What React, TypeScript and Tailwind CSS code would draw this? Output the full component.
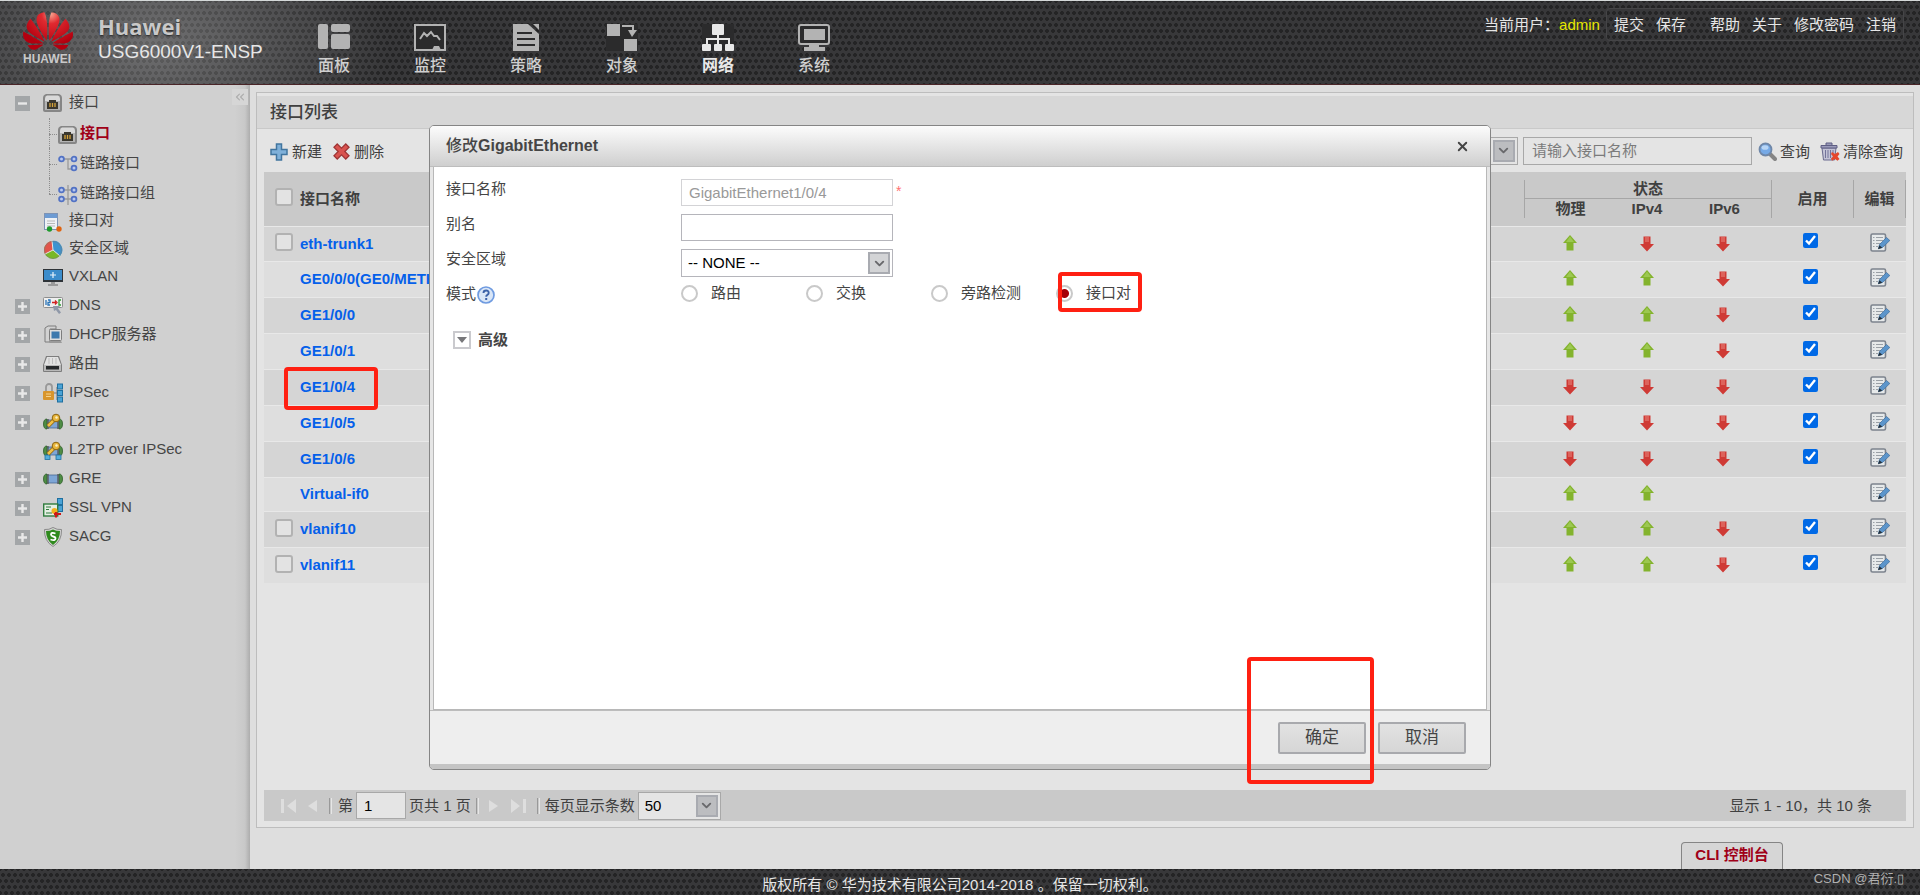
import React, { useState } from "react";
import { ChevronDown, ChevronsLeft, X } from "lucide-react";
import { SiHuawei } from "react-icons/si";
import clsx from "clsx";

type Status = "up" | "down" | null;

interface InterfaceRow {
  name: string;
  selectable?: boolean;
  marked?: boolean;
  physical: Status;
  ipv4: Status;
  ipv6: Status;
  enabled?: boolean;
}

interface TreeItem {
  label: string;
  icon: React.ReactNode;
  toggle?: boolean;
}

const PATTERN =
  "bg-[#38383a] bg-[radial-gradient(circle,#242425_1.6px,transparent_2.2px),radial-gradient(circle,#242425_1.6px,transparent_2.2px)] bg-[length:6px_12px] bg-[position:0_0,3px_6px]";

const rows: InterfaceRow[] = [
  { name: "eth-trunk1", selectable: true, physical: "up", ipv4: "down", ipv6: "down", enabled: true },
  { name: "GE0/0/0(GE0/METH)", physical: "up", ipv4: "up", ipv6: "down", enabled: true },
  { name: "GE1/0/0", physical: "up", ipv4: "up", ipv6: "down", enabled: true },
  { name: "GE1/0/1", physical: "up", ipv4: "up", ipv6: "down", enabled: true },
  { name: "GE1/0/4", marked: true, physical: "down", ipv4: "down", ipv6: "down", enabled: true },
  { name: "GE1/0/5", physical: "down", ipv4: "down", ipv6: "down", enabled: true },
  { name: "GE1/0/6", physical: "down", ipv4: "down", ipv6: "down", enabled: true },
  { name: "Virtual-if0", physical: "up", ipv4: "up", ipv6: null },
  { name: "vlanif10", selectable: true, physical: "up", ipv4: "up", ipv6: "down", enabled: true },
  { name: "vlanif11", selectable: true, physical: "up", ipv4: "up", ipv6: "down", enabled: true },
];

/* ---------- header icons ---------- */

const NavSvg = ({ children }: { children: React.ReactNode }) => (
  <svg viewBox="0 0 32 27" className="h-[27px] w-8" fill="currentColor">
    {children}
  </svg>
);

const DashboardIcon = () => (
  <NavSvg>
    <rect x="0" y="0" width="10" height="25" rx="2" />
    <rect x="13" y="0" width="19" height="8" rx="2" />
    <rect x="13" y="10" width="19" height="15" rx="2" />
  </NavSvg>
);

const MonitorIcon = () => (
  <NavSvg>
    <rect x="1" y="1" width="30" height="25" fill="#2b2b2c" stroke="currentColor" strokeWidth="2" />
    <path d="M6 15l4-6 3 3 4-4 3 4h3l3 4" fill="none" stroke="currentColor" strokeWidth="2" />
    <path d="M18 26l2-4h5l2 4z" />
  </NavSvg>
);

const PolicyIcon = () => (
  <NavSvg>
    <path d="M3 0h15l11 10v17H3z" />
    <path d="M20 0h9v7z" fill="#2b2b2c" />
    <path d="M23 0h6v6z" />
    <path d="M7 9h15M7 15h18M7 21h18" stroke="#2b2b2c" strokeWidth="2.2" />
  </NavSvg>
);

const ObjectIcon = () => (
  <NavSvg>
    <rect width="32" height="27" fill="#2b2b2c" />
    <rect x="1" y="0" width="13" height="12" />
    <rect x="18" y="15" width="13" height="12" />
    <path d="M16 2h11v6" fill="none" stroke="currentColor" strokeWidth="2" />
    <path d="M22 6h9l-5 7z" />
  </NavSvg>
);

const NetworkIcon = () => (
  <NavSvg>
    <rect width="32" height="27" fill="#2b2b2c" />
    <rect x="10" y="0" width="12" height="11" rx="1" />
    <path d="M16 10v11M5 21v-6h22v6" fill="none" stroke="currentColor" strokeWidth="2" />
    <rect x="0" y="20" width="9" height="7" rx="1" />
    <rect x="12" y="20" width="8" height="7" rx="1" />
    <rect x="23" y="20" width="9" height="7" rx="1" />
  </NavSvg>
);

const SystemIcon = () => (
  <NavSvg>
    <rect x="1" y="1" width="30" height="19" rx="2" fill="#2b2b2c" stroke="currentColor" strokeWidth="2" />
    <rect x="6" y="5" width="21" height="11" />
    <path d="M11 20h10v3h6v4H6v-4h5z" />
  </NavSvg>
);

const navItems = [
  { label: "面板", icon: <DashboardIcon /> },
  { label: "监控", icon: <MonitorIcon /> },
  { label: "策略", icon: <PolicyIcon /> },
  { label: "对象", icon: <ObjectIcon /> },
  { label: "网络", icon: <NetworkIcon />, active: true },
  { label: "系统", icon: <SystemIcon /> },
];

/* ---------- tree icons ---------- */

const TreeSvg = ({ children }: { children: React.ReactNode }) => (
  <svg viewBox="0 0 20 20" className="mt-[3px] size-5 shrink-0">
    {children}
  </svg>
);

const PortIcon = () => (
  <TreeSvg>
    <path d="M3 1h13q3 1 3 4v12a2 2 0 0 1-2 2H2a2 2 0 0 1-2-2V5q0-3 3-4z" fill="#868686" />
    <path d="M4 2.500h11q2 .5 2 3V8H2V5.500q0-2.500 2-3z" fill="#d9d9d9" />
    <path d="M2 8h15v9H2z" fill="#b4b4b4" />
    <path d="M4 16V9h2V7h7v2h2v7z" fill="#3b382f" />
    <path d="M7 10v4M9.500 10v4M12 10v4" stroke="#d6a43a" strokeWidth="1.300" />
  </TreeSvg>
);

const Node = ({ cx, cy }: { cx: number; cy: number }) => (
  <circle cx={cx} cy={cy} r="2.4" fill="#b9c9f0" stroke="#5272c4" strokeWidth="1.8" />
);

const LinkIcon = () => (
  <TreeSvg>
    <path d="M6 4h10M10 4v10h6" fill="none" stroke="#9a9a9a" strokeWidth="1.3" />
    <Node cx={3.5} cy={4} />
    <Node cx={16} cy={4} />
    <Node cx={16} cy={13} />
  </TreeSvg>
);

const LinkGroupIcon = () => (
  <TreeSvg>
    <path d="M10 0v20M6 5h8M6 14h8" stroke="#9a9a9a" strokeWidth="1.3" />
    <Node cx={3.5} cy={5} />
    <Node cx={16} cy={5} />
    <Node cx={3.5} cy={14} />
    <Node cx={16} cy={14} />
  </TreeSvg>
);

const PairIcon = () => (
  <TreeSvg>
    <rect x="1.5" y="1.5" width="13" height="16" fill="#eef1f5" stroke="#7e93b4" />
    <rect x="2" y="2" width="12" height="4" fill="#6d9bd3" />
    <path d="M4 9h8M4 11.500h8M4 14h8" stroke="#b9b9b9" />
    <circle cx="6.500" cy="17" r="2.700" fill="#1f9a2c" />
    <circle cx="16" cy="17" r="2.700" fill="#e0630f" />
  </TreeSvg>
);

const ZoneIcon = () => (
  <TreeSvg>
    <circle cx="10" cy="10" r="9" fill="#79b828" />
    <path d="M10 10L2 14A9 9 0 0 1 9 1z" fill="#e2544a" />
    <path d="M10 10L9 1a9 9 0 0 1 8 15z" fill="#3d94d1" />
    <path d="M10 10L2 14M10 10L9 1M10 10l7 6" stroke="#e6e6e6" />
    <circle cx="10" cy="10" r="8.500" fill="none" stroke="#777" strokeOpacity=".5" />
  </TreeSvg>
);

const VxlanIcon = () => (
  <TreeSvg>
    <rect x="0" y="1" width="20" height="13" fill="#2e3338" />
    <rect x="1" y="2" width="18" height="10" fill="#3b8ccb" />
    <path d="M10 4v6M7 7h6" stroke="#e9f3fb" strokeWidth="1.200" />
    <path d="M8 14h4v2h3v2H5v-2h3z" fill="#9a9a9a" />
  </TreeSvg>
);

const DnsIcon = () => (
  <TreeSvg>
    <rect x=".5" y="1.500" width="19" height="10" rx="1" fill="#efefef" stroke="#8e8e8e" />
    <path d="M3 4v5M5 4h2v2.500H5V9h2" fill="none" stroke="#2a75b8" strokeWidth="1.300" />
    <path d="M9 6.500h4M12 4.500l2 2-2 2" fill="none" stroke="#d11f1f" strokeWidth="1.300" />
    <path d="M18 4h-2v5h2" fill="none" stroke="#2f9c35" strokeWidth="1.300" />
    <path d="M10 10h7l-2 2.500 3 4-2 1.500-3-4-2 1z" fill="#8f98a8" />
  </TreeSvg>
);

const DhcpIcon = () => (
  <TreeSvg>
    <path d="M2 3l3-2h8v3H7v13H2z" fill="#d2d2d2" stroke="#7d7d7d" />
    <rect x="6.500" y="4.500" width="12" height="11" rx="1" fill="#dedede" stroke="#7d7d7d" />
    <rect x="8.500" y="6.500" width="8" height="7" fill="#3e79ad" />
    <path d="M7 16h11l1 2H6z" fill="#9a9a9a" />
  </TreeSvg>
);

const RouteIcon = () => (
  <TreeSvg>
    <path d="M3 2h13l3 9v6a1 1 0 0 1-1 1H1a1 1 0 0 1-1-1v-6z" fill="#7d7d7d" />
    <path d="M4 3h11l3 8H1z" fill="#e2e2e2" />
    <path d="M6 4v6M9.500 4v6M13 4v6" stroke="#bdbdbd" />
    <rect x="1" y="11" width="17" height="6" fill="#b9b9b9" />
    <rect x="3" y="12" width="13" height="3.500" fill="#26292b" />
  </TreeSvg>
);

const IpsecIcon = () => (
  <TreeSvg>
    <path d="M3 9V4a3 3 0 0 1 6 0v5" fill="none" stroke="#989898" strokeWidth="1.800" />
    <rect x="0" y="8" width="11" height="9" rx="1" fill="#d8952c" />
    <path d="M3 11h5M3 13.500h5" stroke="#f6d38c" />
    <path d="M11 10h3M14 4v13" stroke="#777" />
    <g fill="#4aa3d6" stroke="#1f6f9f">
      <rect x="14.500" y="1" width="5" height="5" />
      <rect x="14.500" y="7.500" width="5" height="5" />
      <rect x="14.500" y="14" width="5" height="5" />
    </g>
  </TreeSvg>
);

const Tunnel = () => (
  <>
    <rect x="3" y="6" width="14" height="8" fill="#7ea6d6" stroke="#4a6a94" strokeWidth=".8" />
    <path d="M4 5q-3.500 0-3.500 5T4 15zM16 5q3.500 0 3.500 5T16 15z" fill="#4f8d45" stroke="#2f5e2b" strokeWidth=".8" />
    <path d="M5 5v10M15 5v10" stroke="#555" strokeWidth="1.300" />
  </>
);

const KeyShape = () => (
  <>
    <path d="M12 7L5 14" stroke="#8d6510" strokeWidth="4" />
    <path d="M12 7L5 14" stroke="#efc14a" strokeWidth="2.500" />
    <circle cx="13" cy="6" r="3.800" fill="#e8b63c" stroke="#8d6510" />
    <circle cx="13.500" cy="5.500" r="1.200" fill="#fbf0c8" />
  </>
);

const L2tpIcon = () => (
  <TreeSvg>
    <g transform="translate(0 2)">
      <Tunnel />
    </g>
    <KeyShape />
  </TreeSvg>
);

const L2tpIpsecIcon = () => (
  <TreeSvg>
    <Tunnel />
    <g fill="#55aedb" stroke="#1f6f9f" strokeWidth=".8">
      <rect x="2" y="14" width="5" height="4.500" />
      <rect x="13" y="14" width="5" height="4.500" />
    </g>
    <g transform="translate(0 -1)">
      <KeyShape />
    </g>
  </TreeSvg>
);

const GreIcon = () => (
  <TreeSvg>
    <Tunnel />
  </TreeSvg>
);

const SslIcon = () => (
  <TreeSvg>
    <g fill="#4aa3d6" stroke="#1f6f9f">
      <rect x="14.500" y=".5" width="5" height="6" />
      <rect x="14.500" y="7.500" width="5" height="6" />
    </g>
    <rect x=".7" y="6" width="14" height="12" fill="#e5efe3" stroke="#2f7c3e" strokeWidth="1.400" />
    <path d="M3 9h5M3 11.500h3M3 15h6" stroke="#2f7c3e" strokeWidth="1.200" />
    <circle cx="11.500" cy="13" r="3" fill="#f2b11c" />
    <path d="M11 16h7M13 14v5.500" stroke="#cf1818" strokeWidth="2.200" />
  </TreeSvg>
);

const SacgIcon = () => (
  <TreeSvg>
    <path d="M10 .5Q14 3 18.500 2.500 19 14 10 19.500 1 14 1.500 2.500 6 3 10 .5z" fill="#d5d5d5" stroke="#8a8a8a" />
    <path d="M10 2.500q3 1.500 7 1.500Q17 13 10 18 3 13 3 4q4 0 7-1.500z" fill="#2f8a1e" />
    <path d="M12.500 6.500q-4.500-1.500-4.500 1 0 1.500 2.200 2 2.300.5 2.300 2 0 2.500-5 1" fill="none" stroke="#fff" strokeWidth="1.800" />
  </TreeSvg>
);

const childItems: (TreeItem & { active?: boolean })[] = [
  { label: "接口", icon: <PortIcon />, active: true },
  { label: "链路接口", icon: <LinkIcon /> },
  { label: "链路接口组", icon: <LinkGroupIcon /> },
];

const treeItems: TreeItem[] = [
  { label: "接口对", icon: <PairIcon /> },
  { label: "安全区域", icon: <ZoneIcon /> },
  { label: "VXLAN", icon: <VxlanIcon /> },
  { label: "DNS", icon: <DnsIcon />, toggle: true },
  { label: "DHCP服务器", icon: <DhcpIcon />, toggle: true },
  { label: "路由", icon: <RouteIcon />, toggle: true },
  { label: "IPSec", icon: <IpsecIcon />, toggle: true },
  { label: "L2TP", icon: <L2tpIcon />, toggle: true },
  { label: "L2TP over IPSec", icon: <L2tpIpsecIcon /> },
  { label: "GRE", icon: <GreIcon />, toggle: true },
  { label: "SSL VPN", icon: <SslIcon />, toggle: true },
  { label: "SACG", icon: <SacgIcon />, toggle: true },
];

/* ---------- small shared pieces ---------- */

const Highlight = ({ className }: { className: string }) => (
  <span className={clsx("pointer-events-none absolute rounded-[4px] border-4 border-[#ff2012]", className)} />
);

const Toggle = ({ open, label }: { open?: boolean; label: string }) => (
  <button type="button" aria-label={label} aria-expanded={!!open} className="mt-[3px] flex size-[15px] shrink-0 bg-[#a3a6a8]">
    <svg viewBox="0 0 15 15" className="size-[15px]">
      <path d={open ? "M3 7.500h9" : "M3 7.500h9M7.500 3v9"} stroke="#e8e8e8" strokeWidth="2.400" />
    </svg>
  </button>
);

const StatusArrow = ({ status }: { status: Status }) => {
  if (!status) return null;
  return status === "up" ? (
    <svg viewBox="0 0 14 16" className="mx-auto h-4 w-3.5" role="img" aria-label="up">
      <path d="M7 0l7 8h-3.500v7.500h-7V8H0z" fill="#83b32d" />
      <path d="M7 1.500L11 7H3z" fill="#9cc851" />
    </svg>
  ) : (
    <svg viewBox="0 0 14 16" className="mx-auto mt-0.5 h-4 w-3.5" role="img" aria-label="down">
      <path d="M3.500 .5h7V8H14l-7 7.500L0 8h3.500z" fill="#cf3a35" />
      <path d="M5 1h4v5H5z" fill="#dd625b" />
    </svg>
  );
};

const EditIcon = () => (
  <svg viewBox="0 0 20 20" className="size-5">
    <rect x="1" y="1" width="14.500" height="17" rx="1.500" fill="#e6e9ea" stroke="#7c838d" strokeWidth="1.600" />
    <path d="M3 4.500h1.500M3 7.500h1.500M3 10.500h1.500M3 13.500h1.500M6 4.500h7M6 7.500h7M6 10.500h5M6 13.500h2" stroke="#9aa0a6" />
    <path d="M8.500 15.500l1-4L16.500 4.500 19.800 7.500 12.500 14.500z" fill="#5c95cb" stroke="#3b6c9c" strokeWidth=".7" />
    <path d="M8 16.200l1.400-4 2.900 2.500z" fill="#23303b" />
  </svg>
);

const SelectBox = ({
  id,
  label,
  value,
  className,
  buttonClass,
}: {
  id: string;
  label?: string;
  value: string;
  className?: string;
  buttonClass?: string;
}) => (
  <span className={clsx("relative inline-block h-7 border", className)}>
    <select id={id} aria-label={label} className="h-full w-full appearance-none bg-transparent pl-1.5 text-black outline-none">
      <option>{value}</option>
    </select>
    <span
      className={clsx(
        "pointer-events-none absolute top-0.5 right-0.5 flex size-[22px] items-center justify-center border-2 border-[#a9abb1]",
        buttonClass
      )}
    >
      <ChevronDown size={15} strokeWidth={3} color="#68686b" />
    </span>
  </span>
);

const RowCheckbox = ({ label }: { label: string }) => (
  <input
    type="checkbox"
    aria-label={label}
    className="mb-[3px] size-[18px] shrink-0 appearance-none rounded-[3px] border-2 border-[#b2b2b2] bg-[#e3e3e3] checked:bg-[#0069e6]"
  />
);

/* ---------- page sections ---------- */

const Header = () => (
  <header className={clsx("border-t border-[#d5d9d9]", PATTERN)}>
    <div className="flex h-[84px] border-b border-[#4a2528] bg-[radial-gradient(ellipse_240px_150px_at_150px_40px,#ffffff48,transparent)]">
      <a href="#home" className="ml-[23px] flex w-[75px] flex-col pt-2.5">
        <svg width="0" height="0" className="absolute">
          <defs>
            <radialGradient id="petal" gradientUnits="userSpaceOnUse" cx="13.500" cy="4" r="15">
              <stop offset="0" stopColor="#f6a08c" />
              <stop offset=".3" stopColor="#e02a30" />
              <stop offset="1" stopColor="#b3000f" />
            </radialGradient>
          </defs>
        </svg>
        <span className="flex h-[39px] w-[50px] items-center overflow-hidden">
          <SiHuawei size={50} className="shrink-0 fill-[url(#petal)]" aria-hidden="true" />
        </span>
        <span className="mt-0.5 text-xs leading-[14px] font-bold text-[#c9c9c9]">HUAWEI</span>
      </a>
      <div className="w-[188px] pt-2.5">
        <p className="font-['Open_Sans',sans-serif] text-[22px] leading-[30px] font-bold text-[#c8c8c8] [text-shadow:0_1px_2px_#222]">
          Huawei
        </p>
        <p className="text-[19px] leading-[22px] whitespace-nowrap text-[#e6e6e6]">USG6000V1-ENSP</p>
      </div>
      <nav className="flex">
        {navItems.map((item) => (
          <a
            key={item.label}
            href="#nav"
            className={clsx(
              "flex w-24 flex-col items-center pt-[23px] text-base leading-6",
              item.active ? "font-bold text-[#e8e8e8]" : "font-medium text-[#b3b3b3]"
            )}
          >
            {item.icon}
            <span className={clsx("mt-[3px]", !item.active && "text-[#cfcfcf]")}>{item.label}</span>
          </a>
        ))}
      </nav>
      <div className="mt-[7px] mr-4 ml-auto flex h-[33px] items-center whitespace-nowrap text-[#e6e6e6]">
        <span>当前用户：</span>
        <span className="mr-1.5 text-[#e6e600]">admin</span>
        <div className="flex h-full items-center gap-3 rounded-sm border border-[#454547] px-[7px]">
          <a href="#commit">提交</a>
          <a href="#save" className="mr-3">
            保存
          </a>
          <a href="#help">帮助</a>
          <a href="#about">关于</a>
          <a href="#password">修改密码</a>
          <a href="#logout">注销</a>
        </div>
      </div>
    </div>
  </header>
);

const Sidebar = () => (
  <aside className="relative w-[250px] shrink-0 bg-[linear-gradient(to_right,#d0d0d0_94%,#c8c8c8_98%,#adadad)] pt-0.5 text-[#454545]">
    <button type="button" aria-label="收起" className="absolute top-1 right-0.5 bg-[#d6d6d6] p-px">
      <ChevronsLeft size={14} color="#adadad" />
    </button>
    <div className="flex h-[29px] items-center pl-[15px]">
      <Toggle open label="接口" />
      <span className="w-[13px]" />
      <PortIcon />
      <a href="#interface" className="ml-1.5">
        接口
      </a>
    </div>
    <ul className="ml-[49px] pt-0.5">
      {childItems.map((item, index) => (
        <li
          key={item.label}
          className={clsx("relative flex h-[30px] items-center pl-[9px]", item.active && "font-bold text-[#a00018]")}
        >
          <span
            className={clsx(
              "absolute top-0 left-0 border-l border-dotted border-[#8c8c8c]",
              index === childItems.length - 1 ? "h-4" : "h-full"
            )}
          />
          <span className="absolute top-4 left-0 w-2 border-t border-dotted border-[#8c8c8c]" />
          {item.icon}
          <a href="#interface" className="ml-0.5">
            {item.label}
          </a>
        </li>
      ))}
    </ul>
    <ul className="-mt-0.5">
      {treeItems.map((item) => (
        <li key={item.label} className={clsx("flex items-center pl-[15px]", item.toggle ? "h-[29px]" : "h-7")}>
          {item.toggle ? <Toggle label={item.label} /> : <span className="w-[15px]" />}
          <span className="w-[13px]" />
          {item.icon}
          <a href="#interface" className="ml-1.5">
            {item.label}
          </a>
        </li>
      ))}
    </ul>
  </aside>
);

const Toolbar = () => (
  <div className="flex h-[43px] items-center pr-[3px] pl-1.5">
    <button type="button" className="flex items-center gap-1 pt-0.5">
      <svg viewBox="0 0 18 18" className="size-[18px]">
        <path d="M6.500 1h5v5.500H17v5h-5.500V17h-5v-5.500H1v-5h5.500z" fill="#7fb0d9" stroke="#41759f" strokeWidth="1.500" />
      </svg>
      新建
    </button>
    <button type="button" className="ml-[11px] flex items-center gap-1 pt-0.5">
      <svg viewBox="0 0 18 18" className="size-[17px]">
        <path d="M4.500 1L9 5.500 13.500 1 17 4.500 12.500 9l4.500 4.500-3.500 3.500L9 12.500 4.500 17 1 13.500 5.500 9 1 4.500z" fill="#d9534f" stroke="#9d3434" strokeWidth="1.300" />
      </svg>
      删除
    </button>
    <div className="ml-auto flex items-center">
      <SelectBox id="field" label="查询条件" value="接口名称" className="w-[120px] border-[#a8a8a8]" buttonClass="bg-[#bcbdc0]" />
      <input
        type="text"
        aria-label="请输入接口名称"
        placeholder="请输入接口名称"
        className="ml-[5px] h-7 w-[229px] border border-[#a8a8a8] bg-transparent pl-2 outline-none placeholder:text-[#7b7b7b]"
      />
      <button type="button" className="ml-1.5 flex items-center gap-[3px] pt-0.5">
        <svg viewBox="0 0 19 19" className="size-[19px]">
          <path d="M11 11l6 6" stroke="#858585" strokeWidth="4" strokeLinecap="round" />
          <circle cx="7.500" cy="7.500" r="6" fill="#76a9e6" stroke="#6f87a8" strokeWidth="1.800" />
          <ellipse cx="7" cy="5.500" rx="3.500" ry="2.300" fill="#b8d5f5" />
        </svg>
        查询
      </button>
      <button type="button" className="ml-2.5 flex items-center gap-[3px] pt-0.5">
        <svg viewBox="0 0 20 19" className="h-[19px] w-5">
          <path d="M2 6h14l-1.500 12h-11z" fill="#c3c3d6" stroke="#6b6b8f" />
          <path d="M5.500 8v8M8 8v8M10.500 8v8M13 8v4" stroke="#73739a" />
          <path d="M1 3.500h16v2.500H1zM6 3V1h6v2" fill="#9b9bbb" stroke="#5f5f83" />
          <path d="M12 10l3 2 3-2 1.500 2-2 2.500 2 2.500-2 1.800-2.500-1.800-3 1.800-1-2.300 2-2-2-2.500z" fill="#e4472d" />
        </svg>
        清除查询
      </button>
    </div>
  </div>
);

const InterfaceTable = () => (
  <table className="w-full table-fixed border-collapse">
    <colgroup>
      <col />
      <col className="w-[92px]" />
      <col className="w-[62px]" />
      <col className="w-[94px]" />
      <col className="w-[81px]" />
      <col className="w-[53px]" />
    </colgroup>
    <thead className="bg-[#c9c9c9] text-[#404040]">
      <tr className="h-[27px]">
        <th rowSpan={2} className="pl-[11px] text-left">
          <span className="flex items-center gap-[7px]">
            <RowCheckbox label="全选" />
            接口名称
          </span>
        </th>
        <th colSpan={3} className="p-0 align-bottom">
          <div className="h-[19px] border-x border-b border-[#a6a6a6] leading-[18px]">状态</div>
        </th>
        <th rowSpan={2} className="p-0">
          启用
        </th>
        <th rowSpan={2} className="p-0">
          <div className="h-[38px] border-x border-[#a6a6a6] leading-[38px]">编辑</div>
        </th>
      </tr>
      <tr className="h-[27px] align-top">
        <th className="p-0">
          <div className="h-[19px] border-l border-[#a6a6a6] leading-5">物理</div>
        </th>
        <th className="p-0 leading-5">IPv4</th>
        <th className="p-0">
          <div className="h-[19px] border-r border-[#a6a6a6] leading-5">IPv6</div>
        </th>
      </tr>
    </thead>
    <tbody>
      {rows.map((row, index) => (
        <tr
          key={row.name}
          className={clsx(
            "border-t border-[#e8e8e8]",
            index === 0 ? "h-[35px]" : row.enabled ? "h-9" : "h-[34px]",
            index % 2 === 0 ? "bg-[#d5d5d5]" : "bg-[#dedede]"
          )}
        >
          <td className="py-0 pl-[11px]">
            <div className="flex items-center gap-[7px]">
              {row.selectable ? <RowCheckbox label={row.name} /> : <span className="w-[18px]" />}
              <a href="#edit" className="relative font-bold text-[#0560ea]">
                {row.name}
                {row.marked && <Highlight className="-top-2.5 -left-4 h-[43px] w-[94px]" />}
              </a>
            </div>
          </td>
          <td className="p-0 pb-0.5">
            <StatusArrow status={row.physical} />
          </td>
          <td className="p-0 pb-0.5">
            <StatusArrow status={row.ipv4} />
          </td>
          <td className="p-0 pr-1 pb-0.5">
            <StatusArrow status={row.ipv6} />
          </td>
          <td className="p-0 pr-1 pb-1.5 text-center">
            {row.enabled && (
              <input
                type="checkbox"
                defaultChecked
                aria-label={`启用 ${row.name}`}
                className="mx-auto block size-[15px] accent-[#0069e6]"
              />
            )}
          </td>
          <td className="p-0 pb-0.5">
            <button type="button" aria-label={`编辑 ${row.name}`} className="mx-auto block">
              <EditIcon />
            </button>
          </td>
        </tr>
      ))}
    </tbody>
  </table>
);

const PagerSeparator = () => <span className="h-4 w-[3px] border-r border-l border-r-[#e6e6e6] border-l-[#999]" />;

const Pager = () => (
  <div className="flex h-[31px] items-center bg-[#c9c9c9] pl-[17px] text-[#404040]">
    <button type="button" aria-label="首页">
      <svg viewBox="0 0 16 14" className="h-3.5 w-4" fill="#dedede">
        <path d="M0 0h3v14H0zM15 0v14L6 7z" />
      </svg>
    </button>
    <button type="button" aria-label="上一页" className="mr-3 ml-2.5">
      <svg viewBox="0 0 10 14" className="h-3.5 w-2.5" fill="#dedede">
        <path d="M10 1v12L1 7z" />
      </svg>
    </button>
    <PagerSeparator />
    <label htmlFor="page" className="ml-1.5">
      第
    </label>
    <input id="page" type="text" defaultValue="1" className="mx-[3px] h-[27px] w-[50px] border border-[#a8a8a8] bg-[#e5e5e5] pl-[7px] text-black" />
    <span className="mr-[5px]">页共 1 页</span>
    <PagerSeparator />
    <button type="button" aria-label="下一页" className="mr-3 ml-2.5">
      <svg viewBox="0 0 10 14" className="h-3.5 w-2.5" fill="#dedede">
        <path d="M0 1v12l9-6z" />
      </svg>
    </button>
    <button type="button" aria-label="末页" className="mr-2.5">
      <svg viewBox="0 0 16 14" className="h-3.5 w-4" fill="#dedede">
        <path d="M0 0v14l9-7zM12 0h3v14h-3z" />
      </svg>
    </button>
    <PagerSeparator />
    <label htmlFor="page-size" className="mr-[3px] ml-[5px]">
      每页显示条数
    </label>
    <SelectBox id="page-size" value="50" className="w-[83px] border-[#a8a8a8] bg-[#e5e5e5]" buttonClass="bg-[#bcbdc0]" />
    <span className="mr-[34px] ml-auto">显示 1 - 10，共 10 条</span>
  </div>
);

const modes = ["路由", "交换", "旁路检测", "接口对"];

const EditDialog = () => {
  const [mode, setMode] = useState("接口对");

  return (
    <div
      role="dialog"
      aria-labelledby="dialog-title"
      className="flex w-[1062px] max-w-full flex-col overflow-hidden rounded-[5px] border border-[#858585] bg-[#e6e6e6] text-[#454545]"
    >
      <div className="flex h-[41px] items-center justify-between border-b border-[#bdbdbd] bg-linear-to-b from-[#fcfcfc] to-[#cfcfcf] pr-5 pl-4">
        <h2 id="dialog-title" className="text-base font-bold">
          <span className="font-medium">修改</span>GigabitEthernet
        </h2>
        <button type="button" aria-label="关闭">
          <X size={15} strokeWidth={3} />
        </button>
      </div>
      <form className="mx-[3px] min-h-[543px] border border-t-0 border-[#b8b8b8] bg-white pt-3 pl-3">
        <div className="flex h-[35px] items-start">
          <label htmlFor="name" className="w-[235px] leading-5">
            接口名称
          </label>
          <input id="name" disabled value="GigabitEthernet1/0/4" className="h-[27px] w-[212px] border border-[#d3d3d6] pl-[7px] text-[#999]" />
          <span className="ml-[3px] text-sm leading-6 text-[#ff7070]">*</span>
        </div>
        <div className="flex h-[35px] items-start">
          <label htmlFor="alias" className="w-[235px] leading-5">
            别名
          </label>
          <input id="alias" type="text" className="h-[27px] w-[212px] border border-[#b5b5bb] pl-[7px]" />
        </div>
        <div className="flex h-[35px] items-start">
          <label htmlFor="zone" className="w-[235px] leading-5">
            安全区域
          </label>
          <SelectBox id="zone" value="-- NONE --" className="w-[212px] border-[#b5b5bb]" buttonClass="bg-[#d3d4d6]" />
        </div>
        <fieldset className="flex h-[35px] items-start">
          <legend className="float-left flex w-[235px] items-center gap-px leading-5">
            模式
            <svg viewBox="0 0 18 18" className="mt-0.5 size-[18px]">
              <circle cx="9" cy="9" r="8" fill="#d9e6f7" stroke="#6f9be0" strokeWidth="1.700" />
              <path d="M6.500 7q0-2.500 2.600-2.500T11.700 7q0 1.200-1.300 1.900-1.200.6-1.200 1.900" fill="none" stroke="#3c62a8" strokeWidth="1.900" />
              <rect x="8.200" y="12" width="2" height="2" fill="#3c62a8" />
            </svg>
          </legend>
          {modes.map((item) => (
            <label key={item} className="relative flex w-[125px] items-center gap-[13px] leading-[18px]">
              <input
                type="radio"
                name="mode"
                checked={mode === item}
                onChange={() => setMode(item)}
                className="size-[17px] appearance-none rounded-full border-2 border-[#c9c9c9] bg-white checked:bg-[radial-gradient(circle,#a50008_4px,#fff_5px)]"
              />
              {item}
              {item === "接口对" && <Highlight className="-top-3 left-0.5 h-10 w-[84px]" />}
            </label>
          ))}
        </fieldset>
        <button type="button" className="mt-[11px] ml-[7px] flex items-center gap-[7px] font-bold">
          <span className="flex size-[18px] items-center justify-center border-2 border-[#cacace]">
            <svg viewBox="0 0 10 6" className="h-1.5 w-2.5">
              <path d="M0 0h10L5 6z" fill="#77777a" />
            </svg>
          </span>
          高级
        </button>
      </form>
      <div className="flex h-[54px] items-center justify-end gap-3 border-t border-[#bcbcbc] bg-[#eee] pr-6 text-[17px]">
        <button type="button" className="h-8 w-[88px] rounded-[2px] border-2 border-[#a8a9ad] bg-linear-to-b from-[#e2e2e2] to-[#d6d6d6]">
          确定
        </button>
        <button type="button" className="h-8 w-[88px] rounded-[2px] border-2 border-[#a8a9ad] bg-linear-to-b from-[#e2e2e2] to-[#d6d6d6]">
          取消
        </button>
      </div>
      <div className="h-[5px] bg-[#c4c4c4]" />
    </div>
  );
};

export default function App() {
  return (
    <div className="relative flex min-h-screen flex-col bg-[#dedede] font-['Liberation_Sans','Noto_Sans_CJK_SC',sans-serif] text-[15px] leading-5 text-[#404040]">
      <Header />
      <div className="flex flex-1">
        <Sidebar />
        <main className="flex min-w-0 flex-1 flex-col pt-[7px] pl-1.5">
          <section className="mr-1.5 flex flex-1 flex-col border border-[#bdbdbd] bg-[#e4e4e4] px-[7px] pb-1.5">
            <h1 className="-mx-[7px] mt-[3px] h-[33px] border-b border-[#c9c9c9] bg-[#d7d7d7] pl-[13px] text-[17px] leading-[34px] font-medium">
              接口列表
            </h1>
            <Toolbar />
            <InterfaceTable />
            <div className="flex-1" />
            <Pager />
          </section>
          <div className="flex h-[41px] items-end justify-end pr-[137px]">
            <button
              type="button"
              className="h-[27px] w-[102px] rounded-t-[4px] border border-b-0 border-[#858585] bg-[#d6d6d6] pb-0.5 font-bold text-[#a00018]"
            >
              CLI 控制台
            </button>
          </div>
        </main>
      </div>
      <footer className={clsx("relative h-[26px] text-center leading-8 text-[#e6e6e6]", PATTERN)}>
        版权所有 © 华为技术有限公司2014-2018 。保留一切权利。
        <span className="absolute -top-1.5 right-4 text-[13px] text-[#b0b0b0]">CSDN @君衍.▯</span>
      </footer>
      <div className="absolute inset-0 flex items-center justify-center">
        <div className="relative max-w-full">
          <EditDialog />
          <Highlight className="right-[117px] -bottom-3.5 h-[127px] w-[127px]" />
        </div>
      </div>
    </div>
  );
}
